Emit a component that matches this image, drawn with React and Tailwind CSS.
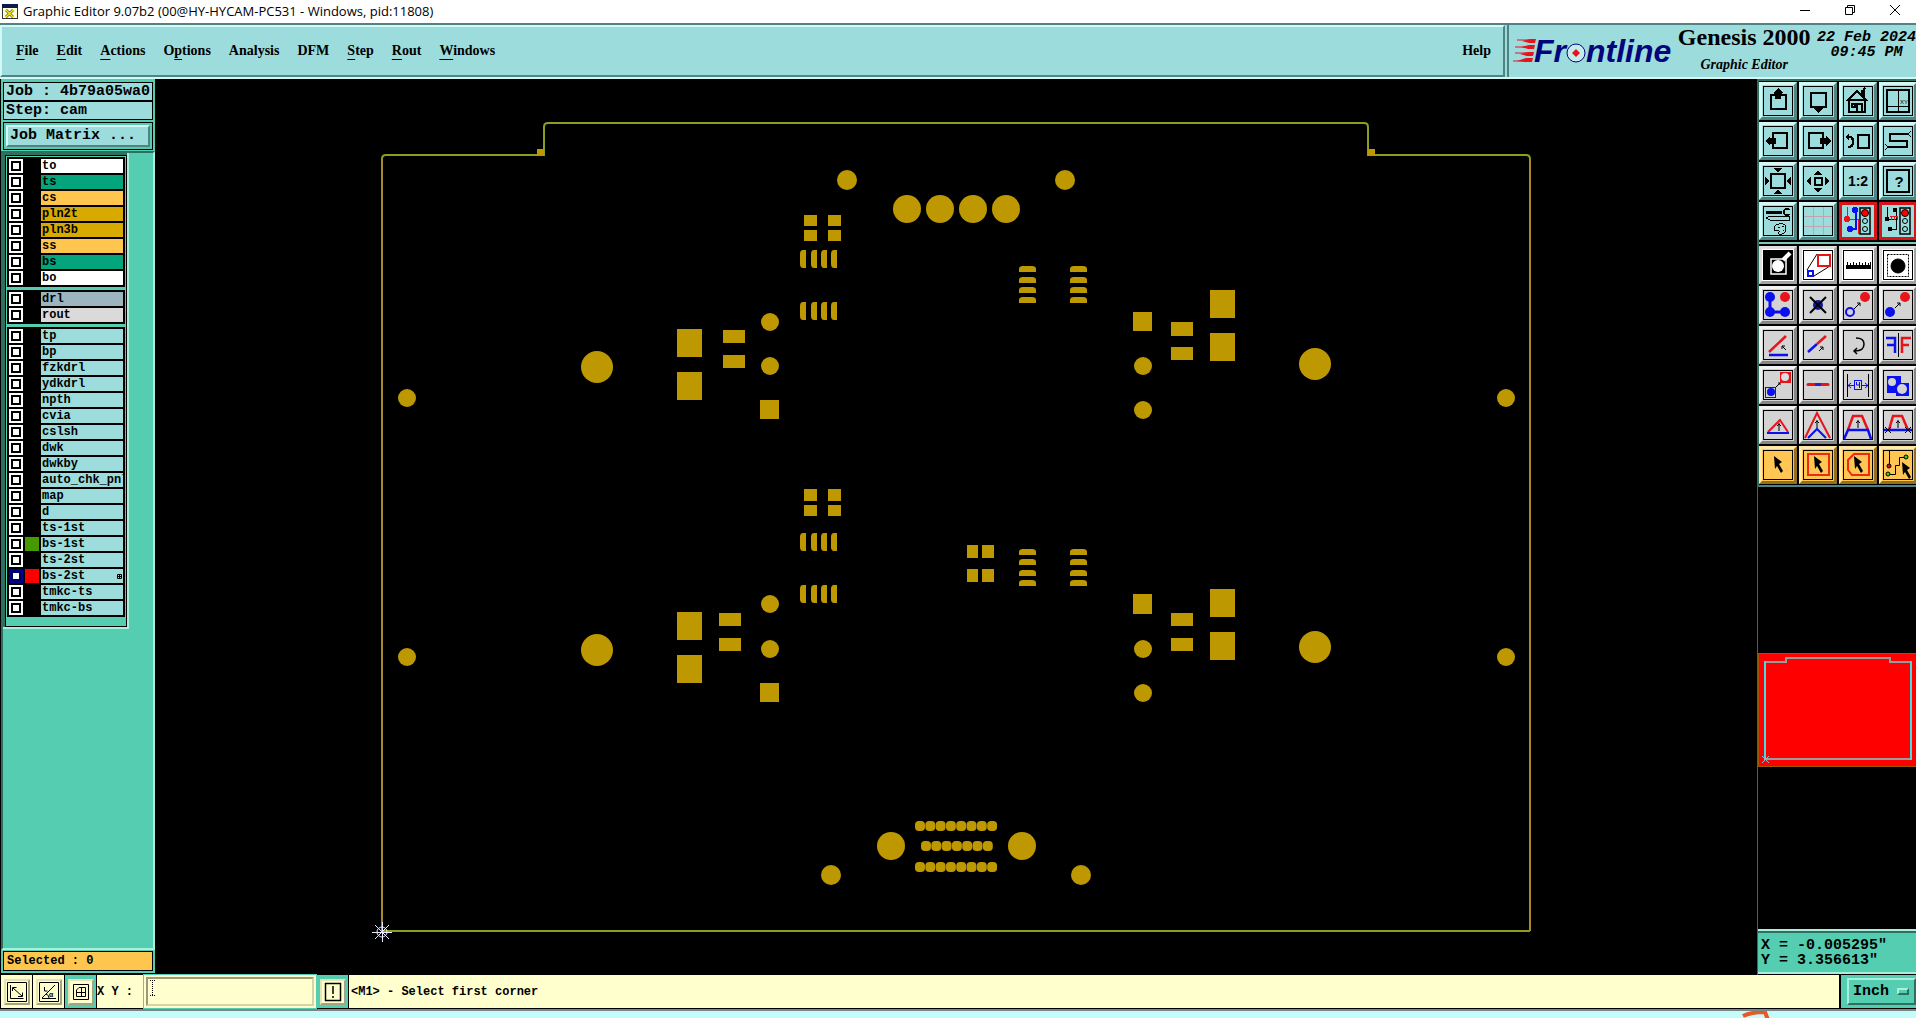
import { useState } from 'react'

const MENUS = [
  { label: 'File', key: 0 },
  { label: 'Edit', key: 0 },
  { label: 'Actions', key: 0 },
  { label: 'Options', key: 1 },
  { label: 'Analysis', key: -1 },
  { label: 'DFM', key: -1 },
  { label: 'Step', key: 0 },
  { label: 'Rout', key: 0 },
  { label: 'Windows', key: 0 },
]

const LAYER_GROUPS = [
  [
    { name: 'to', bg: 'bg-white' },
    { name: 'ts', bg: 'bg-[#04a57c]' },
    { name: 'cs', bg: 'bg-[#ffc64f]' },
    { name: 'pln2t', bg: 'bg-[#d8aa00]' },
    { name: 'pln3b', bg: 'bg-[#d8aa00]' },
    { name: 'ss', bg: 'bg-[#ffc64f]' },
    { name: 'bs', bg: 'bg-[#04a57c]' },
    { name: 'bo', bg: 'bg-white' },
  ],
  [
    { name: 'drl', bg: 'bg-[#9bb4be]' },
    { name: 'rout', bg: 'bg-[#dadada]' },
  ],
  [
    { name: 'tp' },
    { name: 'bp' },
    { name: 'fzkdrl' },
    { name: 'ydkdrl' },
    { name: 'npth' },
    { name: 'cvia' },
    { name: 'cslsh' },
    { name: 'dwk' },
    { name: 'dwkby' },
    { name: 'auto_chk_pnl' },
    { name: 'map' },
    { name: 'd' },
    { name: 'ts-1st' },
    { name: 'bs-1st', swatch: 'bg-[#459a00]' },
    { name: 'ts-2st' },
    { name: 'bs-2st', swatch: 'bg-[#ff0000]', work: true },
    { name: 'tmkc-ts' },
    { name: 'tmkc-bs' },
  ],
]

// Pads of the board, [cx, cy, r]
const ROUND_PADS = [
  [847, 180, 10], [1065, 180, 10],
  [907, 209, 14], [940, 209, 14], [973, 209, 14], [1006, 209, 14],
  [770, 322, 9], [770, 366, 9], [1143, 366, 9], [1143, 410, 9],
  [597, 367, 16], [1315, 364, 16], [407, 398, 9], [1506, 398, 9],
  [770, 604, 9], [770, 649, 9], [1143, 649, 9], [1143, 693, 9],
  [597, 650, 16], [1315, 647, 16], [407, 657, 9], [1506, 657, 9],
  [891, 846, 14], [1022, 846, 14], [831, 875, 10], [1081, 875, 10],
]

// [x, y, width, height]
const RECT_PADS = [
  [804, 215, 13, 11], [828, 215, 13, 11], [804, 230, 13, 11], [828, 230, 13, 11],
  [804, 489, 13, 12], [828, 489, 13, 12], [804, 505, 13, 11], [828, 505, 13, 11],
  [760, 400, 19, 19], [760, 683, 19, 19], [1133, 312, 19, 19], [1133, 594, 19, 20],
  [677, 329, 25, 28], [677, 372, 25, 28], [677, 612, 25, 28], [677, 655, 25, 28],
  [1210, 290, 25, 28], [1210, 333, 25, 28], [1210, 589, 25, 28], [1210, 632, 25, 28],
  [723, 330, 22, 13], [723, 355, 22, 13], [719, 613, 22, 13], [719, 638, 22, 13],
  [1171, 322, 22, 14], [1171, 347, 22, 13], [1171, 613, 22, 13], [1171, 638, 22, 13],
  [967, 545, 11, 13], [982, 545, 12, 13], [967, 569, 11, 13], [982, 569, 12, 13],
  [537, 149, 7, 7], [1368, 149, 7, 7],
]

const PIN_ROWS = [
  { x: 915, y: 821, count: 8 },
  { x: 921, y: 841, count: 7 },
  { x: 915, y: 862, count: 8 },
]

function Board() {
  return (
    <svg viewBox="155 79 1602 896" className="flex-1 min-w-0 bg-black" fill="#be9800">
      <g fill="none" strokeWidth="2">
        <path d="M382 931V159M1530 159V931" stroke="#a88a28" />
        <path d="M382 159q0-4 4-4H544V127q0-4 4-4H1364q4 0 4 4V155H1526q4 0 4 4M382 931H1530" stroke="#8f9d1c" />
      </g>
      {ROUND_PADS.map(([cx, cy, r]) => <circle key={`${cx}-${cy}`} cx={cx} cy={cy} r={r} />)}
      {RECT_PADS.map(([x, y, w, h]) => <rect key={`${x}-${y}`} x={x} y={y} width={w} height={h} />)}
      {[250, 302, 533, 585].map(y => [800, 811, 821, 831].map(x => (
        <path key={`${x}-${y}`} d={`M${x} ${y + 4}q0-4 3-4h3v18h-3q-3 0-3-4z`} />
      )))}
      {[266, 277, 287, 297, 549, 559, 570, 580].map(y => [1019, 1070].map(x => (
        <path key={`${x}-${y}`} d={`M${x} ${y + 6}v-3q0-3 4-3h9q4 0 4 3v3z`} />
      )))}
      {PIN_ROWS.map(row => Array.from({ length: row.count }, (_, i) => (
        <rect key={`${row.y}-${i}`} x={row.x + i * 10.3} y={row.y} width="10" height="10" rx="4" />
      )))}
      {/* Datum */}
      <g stroke="#e8e8ff" fill="none">
        <circle cx="382" cy="932" r="5" />
        <path d="M382.5 922v20M372 932.5h20M375 925l14 14M389 925l-14 14" />
      </g>
    </svg>
  )
}

function UpArrow({ x, y }) {
  return <path d={`M${x} ${y + 8}v-8M${x - 2} ${y + 3}l2-2 2 2`} stroke="#000" strokeWidth="1" fill="none" />
}

function Cursor({ x, y }) {
  return <path transform={`translate(${x} ${y})`} d="M0 0l8 6-3 2 4 7-2 2-4-7-2 3z" fill="#000" stroke="none" />
}

function TrafficLight() {
  return (
    <g stroke="#000" shapeRendering="auto">
      <rect x="17" y="2" width="10" height="26" fill="none" strokeWidth="1.5" />
      <circle cx="22" cy="7" r="3.5" fill="#f00" />
      <circle cx="22" cy="15" r="2.5" fill="none" />
      <circle cx="22" cy="23" r="2.5" fill="none" />
    </g>
  )
}

const RED = '#e8141c'
const BLUE = '#0a10ee'

const VIEW_TOOLS = [
  { name: 'Pan up', icon: <g><rect x="8" y="9" width="15" height="14" strokeWidth="2" /><path d="M15 2l5 5h-1v1h-1v5h-6v-5h-1v-1h-1z" fill="#000" stroke="none" /></g> },
  { name: 'Pan down', icon: <g><rect x="8" y="7" width="15" height="14" strokeWidth="2" /><path d="M15 27l5-5h-1v-2h-8v2h-1z" fill="#000" stroke="none" /></g> },
  { name: 'Home', icon: <path d="M5 14l9-9 9 9zM6 14v12h16v-12M14 26v-8h5v8M9 18h3v3h-3zM19 9v-4h2v6M20 4l2-2" strokeWidth="1.5" /> },
  { name: 'Zoom XY', icon: <g><rect x="4" y="4" width="22" height="22" strokeWidth="2" /><path d="M15 4v22M4 20h22" /><text x="17" y="18" fontSize="6" fill="#000" stroke="none">XY</text></g> },
  { name: 'Pan left', icon: <g><rect x="10" y="7" width="14" height="15" strokeWidth="2" /><path d="M2 15l5-5v2h6v6h-6v2z" fill="#000" stroke="none" /></g> },
  { name: 'Pan right', icon: <g><rect x="6" y="7" width="14" height="15" strokeWidth="2" /><path d="M28 15l-5-5v2h-6v6h6v2z" fill="#000" stroke="none" /></g> },
  { name: 'Previous view', icon: <g><rect x="15" y="9" width="11" height="13" strokeWidth="2" /><path d="M5 11h2q3 0 3 5t-5 5" strokeWidth="2.5" /><path d="M2 11l4-4v8z" fill="#000" stroke="none" /></g> },
  { name: 'Serpentine', icon: <g><path d="M25 8H7V15H24V21H5" strokeWidth="2" /><path d="M25 8l3-3M25 8l3 3M5 21l-3-3M5 21l-3 3" /></g> },
  { name: 'Zoom in', icon: <g><rect x="8" y="8" width="14" height="14" strokeWidth="2" /><path d="M10 2h10l-5 4zM10 28h10l-5-4zM2 10v10l4-5zM28 10v10l-4-5z" fill="#000" stroke="none" /></g> },
  { name: 'Zoom out', icon: <g><rect x="12" y="12" width="7" height="7" strokeWidth="2" /><path d="M10 9h10l-5-4zM10 22h10l-5 4zM8 10v10l-4-5zM22 10v10l4-5z" fill="#000" stroke="none" /></g> },
  { name: 'Scale', icon: <text x="15" y="20" fontSize="14" fontWeight="bold" textAnchor="middle" fill="#000" stroke="none">1:2</text> },
  { name: 'Query', icon: <g><rect x="4" y="4" width="22" height="22" strokeWidth="2" /><text x="16" y="21" fontSize="15" textAnchor="middle" fontWeight="bold" fill="#000" stroke="none">?</text></g> },
  { name: 'Setup', icon: <g><path d="M3 6h16" strokeWidth="3" /><path d="M26 4a3 3 0 1 0 0 4" strokeWidth="2" /><path d="M3 12l4-2h19v4h-19z" /><path d="M12 25q-3-6 4-7t7 4-4 6-3-2-4-1M15 21h2M19 20h2M20 24h1" /></g> },
  { name: 'Grid', icon: <path d="M10 1v28M20 1v28M1 10h28M1 20h28" stroke="#c2a4ac" /> },
  {
    name: 'Net select',
    armed: true,
    icon: <g><path d="M4 1v12h11v15" stroke={RED} /><path d="M13 4v19h-6" stroke={BLUE} strokeWidth="1.5" /><circle cx="4" cy="13" r="3" fill={RED} stroke="none" /><circle cx="12" cy="4" r="3" fill={BLUE} stroke="none" /><circle cx="7" cy="23" r="3" fill={BLUE} stroke="none" /><TrafficLight /></g>,
  },
  {
    name: 'Net check',
    armed: true,
    icon: <g><path d="M4 1v12h9M13 4v19h-6" /><path d="M7 10h7M8 10v4M11 10v4M14 10v4" stroke={RED} /><circle cx="4" cy="13" r="2" fill="#000" /><circle cx="12" cy="4" r="2" fill="#000" /><circle cx="7" cy="23" r="2" fill="#000" /><TrafficLight /></g>,
  },
]

const EDIT_TOOLS = [
  { name: 'Snapshot', tone: 'white', icon: <g><path d="M1 1h28v28h-28z" fill="#000" /><path d="M20 10l7-7" stroke="#fff" strokeWidth="4" /><rect x="8" y="9" width="15" height="15" stroke="#fff" strokeWidth="1.5" /><circle cx="15" cy="16" r="6" fill="#fff" stroke="none" /></g> },
  { name: 'Zoom area', tone: 'white', icon: <g><path d="M4 20l10-16M11 26l16-10" /><rect x="15" y="5" width="12" height="11" stroke={RED} strokeWidth="2" /><rect x="5" y="21" width="5" height="5" stroke={BLUE} strokeWidth="2" /></g> },
  { name: 'Measure', tone: 'white', icon: <g><path d="M3 15h25v4h-25z" fill="#000" stroke="none" /><path d="M4.5 12v4M7.5 13v3M10.5 12v4M13.5 13v3M16.5 12v4M19.5 13v3M22.5 12v4M25.5 13v3M27.5 12v4" /></g> },
  { name: 'Highlight', tone: 'white', icon: <g><rect x="4.5" y="4.5" width="21" height="22" strokeDasharray="2 1" /><circle cx="15" cy="16" r="7" fill="#000" /></g> },
  { name: 'Connect pads', icon: <g stroke="none"><path d="M7 7v15h15" stroke={BLUE} strokeWidth="3" /><circle cx="7" cy="7" r="5" fill={BLUE} /><circle cx="7" cy="22" r="5" fill={BLUE} /><circle cx="22" cy="22" r="5" fill={BLUE} /><circle cx="22" cy="7" r="5" fill={RED} /></g> },
  { name: 'Delete', icon: <g><circle cx="15" cy="15" r="5" fill="#1418a0" stroke="none" /><path d="M7 7l16 16M23 7l-16 16" strokeWidth="2" /></g> },
  { name: 'Copy', icon: <g><circle cx="7" cy="22" r="4" stroke={BLUE} strokeWidth="2" /><circle cx="22" cy="7" r="5" fill={RED} stroke="none" /><path d="M11 19l6-6M14 13h3v3" /></g> },
  { name: 'Move', icon: <g><circle cx="7" cy="22" r="5" fill={BLUE} stroke="none" /><circle cx="22" cy="7" r="5" fill={RED} stroke="none" /><path d="M12 18l5-5M14 13h3v3" /></g> },
  { name: 'Rotate line', icon: <g><path d="M6 22L23 6" stroke={RED} strokeWidth="2.5" /><path d="M6 25h19" stroke={BLUE} strokeWidth="2.5" /><path d="M23 20l-4-4M19 19v-3h3" /></g> },
  { name: 'Extend line', icon: <g strokeWidth="2.5"><path d="M5 22l9-8" stroke={BLUE} /><path d="M14 14l9-8" stroke={RED} /><path d="M16 21l4-4M17 17h3v3" strokeWidth="1" /></g> },
  { name: 'Rotate', icon: <path d="M13 8q8 0 8 6 0 7-9 7M14 18l-3 3 3 3" strokeWidth="1.5" /> },
  { name: 'Mirror', icon: <g strokeWidth="2.5"><path d="M15.5 3v24" strokeWidth="1" /><path d="M3 8h9v15M4 15h8" stroke={BLUE} /><path d="M28 8h-9v15M19 15h7" stroke={RED} /></g> },
  { name: 'Substitute', icon: <g><rect x="17" y="2" width="11" height="11" fill={RED} stroke="none" /><circle cx="22" cy="7" r="4" fill="#ddd" stroke="none" /><rect x="2.5" y="17.5" width="10" height="10" stroke={BLUE} /><circle cx="8" cy="22" r="4" fill={BLUE} stroke="none" /><path d="M13 17l4-4M15 13h2v2" /></g> },
  { name: 'Break line', icon: <g strokeWidth="3"><path d="M5 14.500h20" stroke={RED} strokeLinecap="round" /><path d="M12 14.500h6" stroke="#2c20c0" /></g> },
  { name: 'Spacing', icon: <g><path d="M4.5 4v23M25.5 4v23" /><g stroke={BLUE}><rect x="11.5" y="10.5" width="7" height="9" /><path d="M5 15.500h6M8 13l-3 2.500 3 2.500M19 15.500h6M22 13l3 2.500-3 2.500M13.500 12v3h3M16.500 12v6" /></g></g> },
  { name: 'Merge', icon: <g stroke="none"><path d="M4 6h14v7h8v13h-13v-3h-9z" fill={BLUE} /><circle cx="9" cy="12" r="4" fill="#d3d3d3" /><circle cx="19" cy="19" r="5" fill="#d3d3d3" /></g> },
  { name: 'Slide angle', icon: <g strokeWidth="2"><path d="M5 22L17 10L25 22" stroke={RED} /><path d="M4 23h22" stroke={BLUE} /><UpArrow x={16} y={13} /></g> },
  { name: 'Slide corner', icon: <g strokeWidth="2"><path d="M2 28L14 3L27 28" stroke={RED} /><path d="M5 28l9-9 9 9" stroke={BLUE} /><UpArrow x={14} y={10} /></g> },
  { name: 'Slide segment', icon: <g strokeWidth="2.5"><path d="M5 20L10 6H19L25 20" stroke={RED} /><path d="M1 29L5 20H25L28 29" stroke={BLUE} /><UpArrow x={15} y={10} /></g> },
  { name: 'Slide trim', icon: <g strokeWidth="2.5"><path d="M6 20L10 6H19L25 20" stroke={RED} /><path d="M1 20h28" stroke={BLUE} /><path d="M2 17l6 6M8 17l-6 6M22 17l6 6M28 17l-6 6" strokeWidth="1" /><UpArrow x={15} y={10} /></g> },
  { name: 'Select', tone: 'orange', icon: <Cursor x={11} y={6} /> },
  { name: 'Select frame', tone: 'orange', icon: <g><rect x="5" y="4" width="21" height="21" stroke="#ee2a10" strokeWidth="2" /><Cursor x={11} y={6} /></g> },
  { name: 'Select polygon', tone: 'orange', icon: <g><path d="M11 4H26V25H9L5 20V10z" stroke="#ee2a10" strokeWidth="2" /><Cursor x={11} y={6} /></g> },
  { name: 'Select net', tone: 'orange', icon: <g><path d="M6.5 1v15M5 24.500h7.500v-9h4v-8h7" /><circle cx="23" cy="7" r="2" fill="#3fd000" /><circle cx="5" cy="24" r="2" fill="#3fd000" /><circle cx="6" cy="16" r="2" fill="#e01010" /><Cursor x={19} y={12} /></g> },
]

const TONES = {
  aqua: 'bg-[#9cdcdc] border-t-[#d4f8f6] border-l-[#d4f8f6] border-b-[#4f8482] border-r-[#4f8482]',
  grey: 'bg-[#d3d3d3] border-t-[#f2f2f2] border-l-[#f2f2f2] border-b-[#868686] border-r-[#868686]',
  white: 'bg-white border-t-[#dedede] border-l-[#dedede] border-b-[#a2a2a2] border-r-[#a2a2a2]',
  orange: 'bg-[#ffc653] border-t-[#ffe8a8] border-l-[#ffe8a8] border-b-[#94701e] border-r-[#94701e]',
  armed: 'bg-[#9cdcdc] border-[#d8141a]',
}

function ToolButton({ tool, fallback }) {
  const tone = tool.armed ? 'armed' : tool.tone || fallback
  return (
    <button title={tool.name} aria-label={tool.name} className={`flex h-[38px] w-[38px] shrink-0 items-center justify-center border-3 ${TONES[tone]}`}>
      <svg
        width="30"
        height="30"
        viewBox="0 0 30 30"
        fill="none"
        stroke="#000"
        shapeRendering={fallback === 'aqua' ? 'crispEdges' : 'auto'}
        fontFamily="Liberation Sans, sans-serif"
      >
        {tool.icon}
        {!tool.armed && <rect x="0.5" y="0.5" width="29" height="29" />}
      </svg>
    </button>
  )
}

function Toolbox({ tools, fallback }) {
  return (
    <div className="grid grid-cols-[repeat(4,38px)] gap-[2px] overflow-hidden bg-black">
      {tools.map(tool => <ToolButton key={tool.name} tool={tool} fallback={fallback} />)}
    </div>
  )
}

function LayerRow({ layer }) {
  const [checked, setChecked] = useState(false)
  return (
    <li className="flex h-4 gap-[2px] py-px">
      <span className={`flex w-[14px] items-center justify-center ${layer.work ? 'bg-[#000090]' : 'bg-white'}`}>
        <input
          type="checkbox"
          id={layer.name}
          checked={checked}
          onChange={e => setChecked(e.target.checked)}
          className={`h-[10px] w-[10px] appearance-none border-2 bg-white checked:bg-[#ff0000] ${layer.work ? 'border-[#000060]' : 'border-black'}`}
        />
      </span>
      <span className={`w-[14px] ${layer.swatch || 'bg-black'}`} />
      <label htmlFor={layer.name} className={`flex min-w-0 flex-1 items-center justify-between overflow-hidden pl-px text-xs font-bold leading-[14px] ${layer.bg || 'bg-[#9cdcdc]'}`}>
        {layer.name}
        {layer.work && (
          <svg width="5" height="5" viewBox="0 0 5 5" className="mr-px shrink-0" fill="none" stroke="#000">
            <path d="M.5.5h4v4h-4zM2.500 0v5M0 2.500h5" />
          </svg>
        )}
      </label>
    </li>
  )
}

function LayerPanel() {
  return (
    <aside className="mb-[2px] ml-px flex w-[154px] shrink-0 flex-col bg-[#55cdb0]">
      <div className="mx-[2px] mt-[3px] border border-black bg-[#9cdcdc] text-[15px] font-bold leading-[17px] whitespace-nowrap">
        <div className="border-b-2 border-black pl-[2px]">Job : 4b79a05wa0</div>
        <div className="pl-[2px]">Step: cam</div>
      </div>
      <div className="mx-[2px] mt-[2px] border border-black p-[2px]">
        <button className="block w-full border-2 border-t-[#d4f8f6] border-l-[#d4f8f6] border-b-[#4f8482] border-r-[#4f8482] bg-[#9cdcdc] px-[2px] text-left text-[15px] font-bold leading-[18px]">
          Job Matrix ...
        </button>
      </div>
      <div className="mt-px flex flex-1 flex-col border-2 border-t-[#2f6f60] border-l-[#2f6f60] border-b-[#a8f0dc] border-r-[#a8f0dc]">
        <div className="w-[126px] border-r-2 border-b-2 border-[#a8f0dc] bg-[#2f6f60] pt-[2px] pl-[2px]">
          <div className="flex flex-col gap-[3px] border border-black bg-[#55cdb0] px-px pt-px pb-[9px]">
            {LAYER_GROUPS.map(group => (
              <ul key={group[0].name} className="bg-black px-[2px] py-px">
                {group.map(layer => <LayerRow key={layer.name} layer={layer} />)}
              </ul>
            ))}
          </div>
        </div>
      </div>
      <div className="mx-[2px] mt-px mb-[2px] border border-black bg-[#ffc64f] px-[3px] text-xs font-bold leading-[18px]">Selected : 0</div>
    </aside>
  )
}

function Overview() {
  return (
    <svg viewBox="0 0 158 114" className="block h-[114px] w-full" preserveAspectRatio="none" fill="none">
      <rect width="158" height="114" fill="#f00" />
      <path d="M0 .5h158M.5 0v114M0 113.5h158" stroke="#9a5a00" />
      <path d="M7 9h21v-4h104v4h21M7 106h146" stroke="#9c9c9c" strokeWidth="2" />
      <path d="M7 8v99M153 8v99" stroke="#45dcdc" strokeWidth="2" />
      <path d="M4 103l7 7M11 103l-7 7" stroke="#9ab8c8" />
    </svg>
  )
}

function ToolPanel() {
  return (
    <aside className="flex w-[159px] shrink-0 flex-col overflow-hidden border-l border-[#2f6f60]">
      <div className="border-t-2 border-l border-[#2f6f60] pt-px">
        <Toolbox tools={VIEW_TOOLS} fallback="aqua" />
        <div className="my-[2px] h-[2px] bg-[#7cc8b8]" />
        <Toolbox tools={EDIT_TOOLS} fallback="grey" />
        <div className="mt-px h-[2px] bg-[#4f8482]" />
      </div>
      <div className="flex flex-1 flex-col justify-center pt-1">
        <Overview />
      </div>
      <div className="mb-px h-[45px] border-y-2 border-[#a8f0dc]">
        <div className="h-full border-t-2 border-[#2f6f60] bg-[#55cdb0] px-[3px] pt-[5px] text-[15px] font-bold leading-[15px]">
          <p className="whitespace-pre">X = -0.005295"</p>
          <p className="whitespace-pre">Y = 3.356613"</p>
        </div>
      </div>
    </aside>
  )
}

function Logo() {
  return (
    <div className="flex items-center" aria-label="Frontline">
      <svg width="24" height="26" viewBox="0 0 24 26" fill="#e8141c">
        <path d="M9 3l8-2h6l-1 4h-6zM8 9l8-2h6l-1 4h-6zM7 16l8-2h6l-1 4h-6zM4 23l9-3h7l-1 4h-7z" />
        <path d="M4 2h17M2 9h18M2 15h17M0 23h18" stroke="#e8141c" />
      </svg>
      <span className="-ml-[3px] flex items-center font-[Liberation_Sans,sans-serif] text-[32px] font-bold italic leading-[32px] text-[#04047c]">
        Fr
        <svg width="20" height="20" viewBox="0 0 20 20" className="mt-1" fill="none">
          <circle cx="10" cy="10" r="9" fill="#c4ecec" stroke="#04047c" />
          <path d="M10 6l4 4-4 4-4-4z" fill="#e8141c" />
        </svg>
        ntline
      </span>
    </div>
  )
}

function TitleBar() {
  return (
    <header className="flex h-[23px] shrink-0 items-center bg-white pl-[2px]">
      <svg width="16" height="16" viewBox="0 0 16 16" fill="none">
        <rect x="0.5" y="0.5" width="15" height="14" fill="#ffffd0" stroke="#333" />
        <path d="M0 0h16v4h-16z" fill="#0a1a50" />
        <path d="M4 6l7 7M11 6l-7 7" stroke="#444" strokeWidth="2.5" />
        <path d="M4 6l7 7M11 6l-7 7" stroke="#f4e820" strokeWidth="1.5" />
      </svg>
      <h1 className="ml-[5px] flex-1 font-['Open_Sans',sans-serif] text-[13px]">Graphic Editor 9.07b2 (00@HY-HYCAM-PC531 - Windows, pid:11808)</h1>
      <div className="flex gap-[35px] pr-4 pb-[3px]">
        <button aria-label="Minimize">
          <svg width="10" height="10" viewBox="0 0 10 10" stroke="#000"><path d="M0 5.5h10" /></svg>
        </button>
        <button aria-label="Restore">
          <svg width="10" height="10" viewBox="0 0 10 10" stroke="#000" fill="none"><path d="M.5 2.5h7v7h-7zM2.5 2.5v-2h7v7h-2" /></svg>
        </button>
        <button aria-label="Close">
          <svg width="10" height="10" viewBox="0 0 10 10" stroke="#000"><path d="M0 0l10 10M10 0l-10 10" /></svg>
        </button>
      </div>
    </header>
  )
}

function MenuBar() {
  return (
    <div className="flex h-14 shrink-0 border-t-2 border-b-2 border-t-[#4f8482] border-b-[#d4f8f6] bg-[#9cdcdc]">
      <nav className="flex min-w-0 flex-1 items-center gap-[18px] border-2 border-t-[#d4f8f6] border-l-[#d4f8f6] border-b-[#4f8482] border-r-[#4f8482] pr-3 pb-[2px] pl-[14px] font-['Liberation_Serif',serif] text-[14px] font-bold">
        {MENUS.map(({ label, key }) => (
          <button key={label}>
            {key < 0 ? label : (
              <>
                {label.slice(0, key)}
                <span className="underline underline-offset-4">{label[key]}</span>
                {label.slice(key + 1)}
              </>
            )}
          </button>
        ))}
        <button className="ml-auto">Help</button>
      </nav>
      <div className="ml-[2px] flex w-[409px] shrink-0 items-center justify-between overflow-hidden border-l-2 border-[#4f8482] pl-1">
        <Logo />
        <div className="text-center font-['Liberation_Serif',serif] font-bold">
          <p className="text-2xl leading-[24px]">Genesis 2000</p>
          <p className="mt-1 text-[14px] italic leading-[24px]">Graphic Editor</p>
        </div>
        <div className="-mt-3 text-center text-[15px] font-bold italic leading-[15px]">
          <p>22 Feb 2024</p>
          <p>09:45 PM</p>
        </div>
      </div>
    </div>
  )
}

function ModeButton({ name, on, children }) {
  return (
    <button aria-label={name} className={`flex w-[31px] shrink-0 items-center justify-center ${on ? 'bg-[#55cdb0]' : 'bg-[#ffffce]'}`}>
      <span className="border-2 border-t-[#e4e4b4] border-l-[#e4e4b4] border-b-[#a4a484] border-r-[#a4a484] bg-[#ffffce] p-px">
        <svg width="20" height="20" viewBox="0 0 20 20" fill="none" stroke="#000">
          {children}
        </svg>
      </span>
    </button>
  )
}

function StatusBar() {
  const [xy, setXy] = useState('')
  return (
    <footer className="shrink-0">
      <div className="flex h-[33px] gap-px bg-black pl-px text-xs font-bold">
        <ModeButton name="Diagonal">
          <path d="M.5.5h19v19h-19zM3.5 3v13.5h13M6 6l9 8M5.5 9v-3.500h4M11 14.500h4.500v-4" />
        </ModeButton>
        <ModeButton name="Angle">
          <path d="M.5.5h19v19h-19zM3 16L16 3M3 16.500h14M5.500 5v4h3M7 12q3 1 3 4" />
          <text x="10" y="15" fontSize="7" fill="#000" stroke="none">α</text>
        </ModeButton>
        <ModeButton name="Grid snap" on>
          <path d="M2.500 2.500h15v15h-15zM8 5.500h6.500v9h-9v-6.500zM10.500 5v10M5 10.500h10" />
        </ModeButton>
        <label htmlFor="xy" className="flex w-[46px] items-center bg-[#ffffce] whitespace-pre">X Y :</label>
        <div className="flex w-[172px] bg-[#ffffce] p-[2px] ring-1 ring-[#55cdb0]">
          <div className="flex flex-1 items-center border-2 border-t-[#9a9a78] border-l-[#9a9a78] border-b-[#d4d4a8] border-r-[#d4d4a8] pl-[2px]">
            <svg width="5" height="16" viewBox="0 0 5 16" className="mb-2" stroke="#000" fill="none" strokeDasharray="1 1">
              <path d="M2.5 0v16M0 .5h5M0 15.5h5" />
            </svg>
            <input id="xy" value={xy} onChange={e => setXy(e.target.value)} className="min-w-0 flex-1 bg-transparent outline-none" />
          </div>
        </div>
        <ModeButton name="Alert" on>
          <path d="M2.500 1.500h15v17h-15zM10 4v8M10 14v2" strokeWidth="1.500" />
        </ModeButton>
        <p className="flex flex-1 items-center bg-[#ffffce] pl-[2px] whitespace-pre">{'<M1> - Select first corner'}</p>
        <div className="ml-px flex w-[75px] bg-[#55cdb0] py-[3px] pl-[6px]">
          <div className="flex flex-1 items-center border-2 border-t-[#a8f0dc] border-l-[#a8f0dc] border-b-[#2f6f60] border-r-[#2f6f60] pl-1">
            <select aria-label="Units" className="w-[44px] appearance-none bg-transparent text-[15px] font-bold outline-none">
              <option>Inch</option>
              <option>mm</option>
            </select>
            <span className="h-[7px] w-3 border-2 border-t-[#a8f0dc] border-l-[#a8f0dc] border-b-[#2f6f60] border-r-[#2f6f60]" />
          </div>
        </div>
      </div>
      <div className="border-t border-black bg-black">
        <div className="flex h-[9px] justify-end overflow-hidden border-t-2 border-[#7c8888] bg-[#c4fbfb] pr-[145px]">
          <svg width="30" height="7" viewBox="0 0 30 7" fill="none" stroke="#e85a24" strokeWidth="4">
            <path d="M2 5q8-4 22-4l3 8" />
          </svg>
        </div>
      </div>
    </footer>
  )
}

export default function App() {
  return (
    <div className="flex h-screen flex-col overflow-hidden bg-black font-['Liberation_Mono',monospace] text-black">
      <TitleBar />
      <MenuBar />
      <main className="flex min-h-0 flex-1">
        <LayerPanel />
        <Board />
        <ToolPanel />
      </main>
      <StatusBar />
    </div>
  )
}
